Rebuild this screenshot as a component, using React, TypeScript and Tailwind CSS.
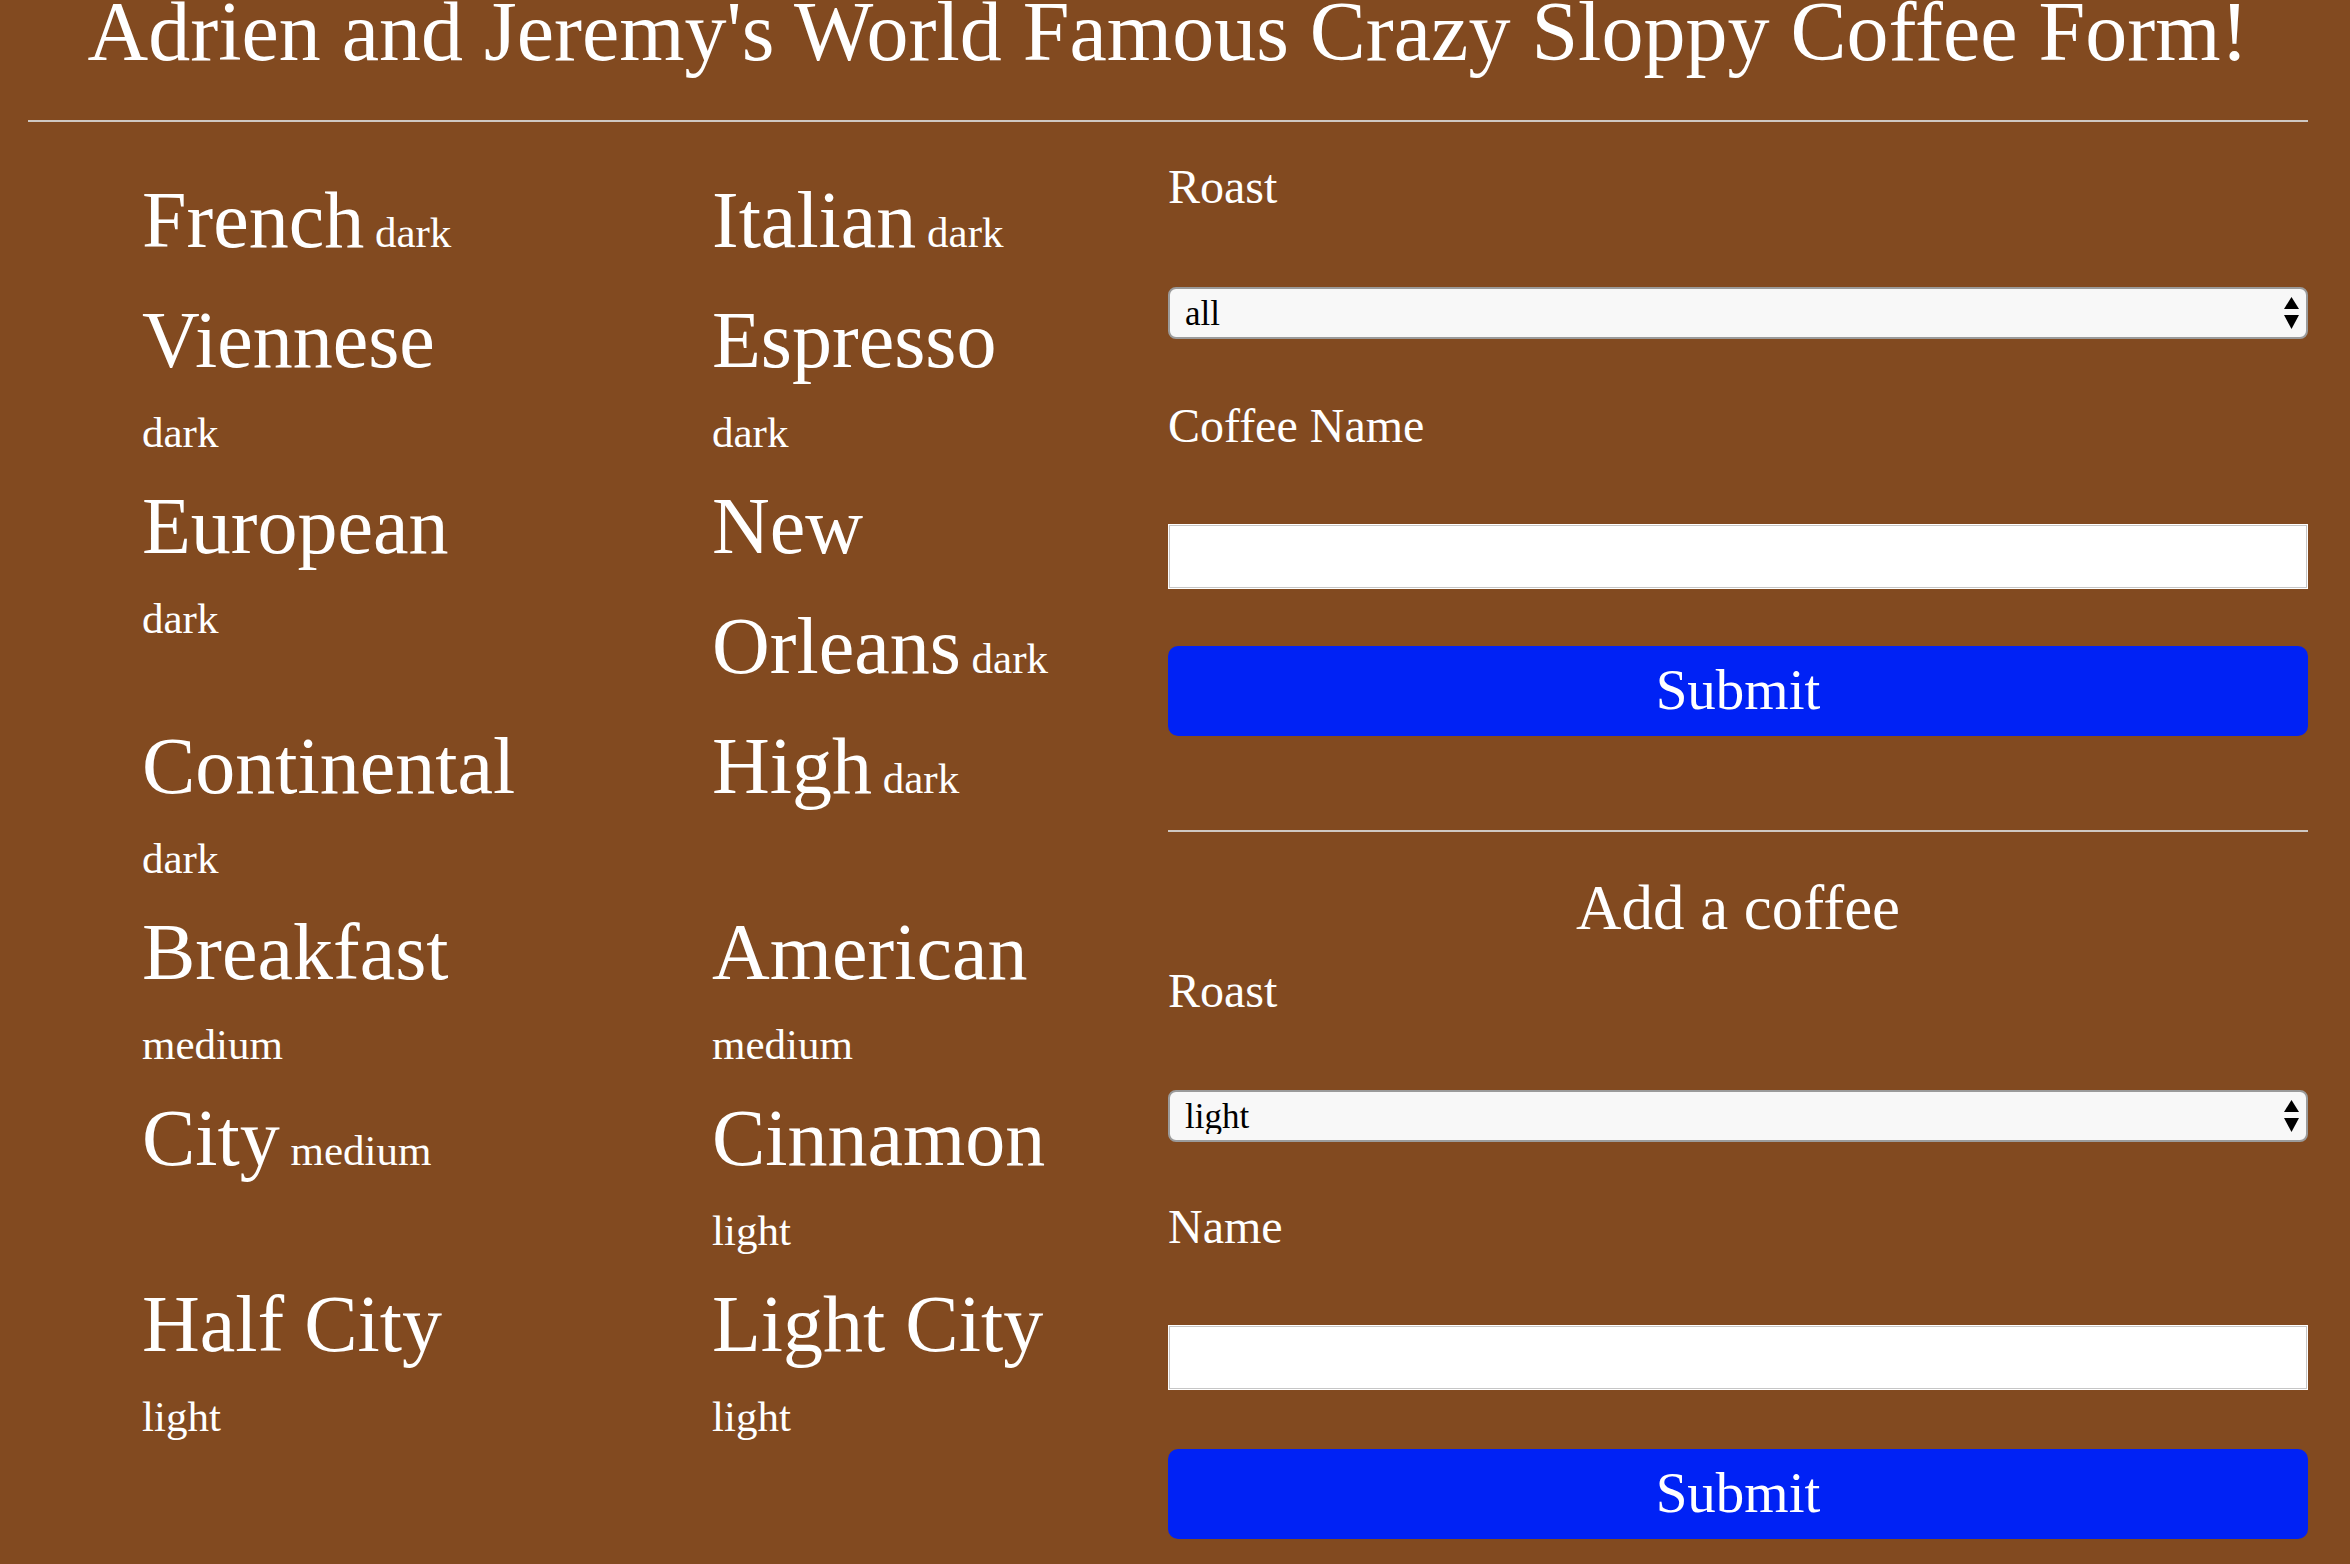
const coffees: { name: string; roast: string }[] = [
  { name: 'French', roast: 'dark' },
  { name: 'Italian', roast: 'dark' },
  { name: 'Viennese', roast: 'dark' },
  { name: 'Espresso', roast: 'dark' },
  { name: 'European', roast: 'dark' },
  { name: 'New Orleans', roast: 'dark' },
  { name: 'Continental', roast: 'dark' },
  { name: 'High', roast: 'dark' },
  { name: 'Breakfast', roast: 'medium' },
  { name: 'American', roast: 'medium' },
  { name: 'City', roast: 'medium' },
  { name: 'Cinnamon', roast: 'light' },
  { name: 'Half City', roast: 'light' },
  { name: 'Light City', roast: 'light' },
];

function Arrows() {
  return (
    <svg
      className="pointer-events-none absolute right-[9px] top-[10px]"
      width="15"
      height="32"
      viewBox="0 0 15 32"
    >
      <polygon points="7.5,0 15,12 0,12" fill="#000" />
      <polygon points="0,18 15,18 7.5,32" fill="#000" />
    </svg>
  );
}

function RoastSelect({ options, className }: { options: string[]; className: string }) {
  return (
    <div className={`relative h-[52px] ${className}`}>
      <select className="h-full w-full appearance-none rounded-[8px] border-2 border-[#9b9b9b] bg-[#f8f8f8] pl-[15px] text-[35px] leading-none text-black outline-none">
        {options.map((o) => (
          <option key={o}>{o}</option>
        ))}
      </select>
      <Arrows />
    </div>
  );
}

function TextInput({ className }: { className: string }) {
  return (
    <input
      type="text"
      className={`h-[65px] w-full border border-white bg-white text-[35px] text-black shadow-[inset_0_0_0_1px_#c6c6c6] outline-none ${className}`}
    />
  );
}

function SubmitButton({ className }: { className: string }) {
  return (
    <button
      className={`h-[90px] w-full rounded-[10px] bg-[#0022f5] pb-[3px] text-[57px] leading-none text-white ${className}`}
    >
      Submit
    </button>
  );
}

export default function App() {
  return (
    <div className="flex min-h-screen flex-col bg-[#824a20] pl-[28px] pr-[42px] font-['Liberation_Serif',serif] text-white">
      <h1 className="-mt-[10px] text-center text-[84px] leading-[84px]">
        Adrien and Jeremy's World Famous Crazy Sloppy Coffee Form!
      </h1>
      <hr className="mt-[46px] border-t-2 border-[#cfc8c2]" />

      <div className="flex items-start">
        {/* Coffee list */}
        <div className="grid w-1/2 grid-cols-2 pt-[38px]">
          {coffees.map((c) => (
            <div key={c.name} className="pl-[114px]">
              <div className="w-[350px] text-[43px] leading-[66px]">
                <span className="text-[80px] leading-[120px]">{c.name}</span> <span>{c.roast}</span>
              </div>
            </div>
          ))}
        </div>

        {/* Forms */}
        <div className="flex w-1/2 flex-col pt-[29px]">
          <label className="text-[48px] leading-[72px]">Roast</label>
          <RoastSelect options={['all', 'light', 'medium', 'dark']} className="mt-[64px]" />
          <label className="mt-[51px] text-[48px] leading-[72px]">Coffee Name</label>
          <TextInput className="mt-[62px]" />
          <SubmitButton className="mt-[57px]" />

          <hr className="mt-[94px] border-t-2 border-[#cfc8c2]" />

          <h2 className="mt-[29px] text-center text-[63px] leading-[94px]">Add a coffee</h2>
          <label className="text-[48px] leading-[72px]">Roast</label>
          <RoastSelect options={['light', 'medium', 'dark']} className="mt-[63px]" />
          <label className="mt-[49px] text-[48px] leading-[72px]">Name</label>
          <TextInput className="mt-[62px]" />
          <SubmitButton className="mt-[59px]" />
        </div>
      </div>
    </div>
  );
}
